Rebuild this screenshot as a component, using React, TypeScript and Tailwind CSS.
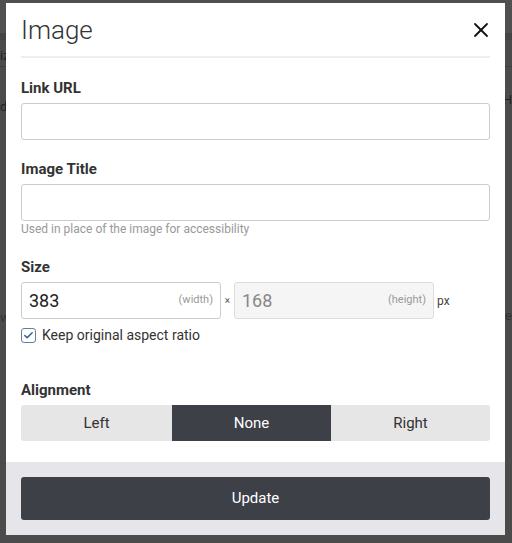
import { X, Check } from "lucide-react";

const font = { fontFamily: "Roboto, 'Noto Sans', sans-serif" };

function Label({ children }: { children: React.ReactNode }) {
  return (
    <div className="text-[15px] font-bold text-[#333] leading-none mb-[7px]">
      {children}
    </div>
  );
}

export default function App() {
  return (
    <div
      className="relative w-[512px] h-[543px] overflow-hidden bg-[#4b4b4b]"
      style={font}
    >
      {/* page behind the overlay */}
      <div className="absolute inset-0 text-[13px] text-[#2e2e2e]">
        <div className="h-[33px] bg-[#505050]" />
        <div className="h-[7px] bg-[#444]" />
        <div className="h-[27px] border-b border-[#3e3e3e] pt-[6px] text-[#1f1f1f]">
          iz
        </div>
        <div className="pt-[30px] text-[#222]">d.</div>
        <div className="absolute right-0 top-[90px] text-[#222]">H</div>
        <div className="absolute left-0 top-[308px] text-[#333]">w</div>
        <div className="absolute right-0 top-[306px] text-[#333]">e</div>
      </div>

      <div className="absolute left-[6px] top-[3px] w-[499px] bg-white">
        <div className="px-[15px]">
          <div className="flex items-center justify-between h-[55px] border-b-2 border-[#eeeeee]">
            <h1 className="text-[26px] font-light text-[#333] leading-none">
              Image
            </h1>
            <X size={24} strokeWidth={1.8} className="text-[#111] mr-[-3px]" />
          </div>

          <div className="pt-[23px]">
            <Label>Link URL</Label>
            <div className="h-[37px] border border-[#cccccc] rounded-[3px]" />
          </div>

          <div className="pt-[22px]">
            <Label>Image Title</Label>
            <div className="h-[37px] border border-[#cccccc] rounded-[3px]" />
            <div className="text-[12px] text-[#999] mt-[1px] leading-[14px]">
              Used in place of the image for accessibility
            </div>
          </div>

          <div className="pt-[24px]">
            <Label>Size</Label>
            <div className="flex items-center">
              <div className="flex items-center justify-between w-[200px] h-[37px] border border-[#cccccc] rounded-[3px] px-[7px]">
                <span className="text-[18px] text-[#222]">383</span>
                <span className="text-[11px] text-[#999]">(width)</span>
              </div>
              <span className="w-[13px] text-center text-[10px] text-[#555]">×</span>
              <div className="flex items-center justify-between w-[200px] h-[37px] border border-[#dddddd] bg-[#f5f5f5] rounded-[3px] px-[7px]">
                <span className="text-[18px] text-[#888]">168</span>
                <span className="text-[11px] text-[#999]">(height)</span>
              </div>
              <span className="ml-[3px] text-[12px] text-[#444]">px</span>
            </div>
            <div className="flex items-center mt-[6px] gap-[6px]">
              <div className="w-[15px] h-[15px] rounded-[3px] border border-[#6b7f95] flex items-center justify-center bg-white">
                <Check size={11} strokeWidth={3.2} className="text-[#2a5f95]" />
              </div>
              <span className="text-[14px] text-[#333]">Keep original aspect ratio</span>
            </div>
          </div>

          <div className="pt-[37px] pb-[21px]">
            <Label>Alignment</Label>
            <div className="flex h-[36px] rounded-[3px] overflow-hidden text-[15px]">
              <div className="w-[151px] bg-[#e6e6e6] text-[#333] flex items-center justify-center">
                Left
              </div>
              <div className="w-[159px] bg-[#3e4048] text-white flex items-center justify-center">
                None
              </div>
              <div className="flex-1 bg-[#e6e6e6] text-[#333] flex items-center justify-center">
                Right
              </div>
            </div>
          </div>
        </div>

        <div className="bg-[#e6e6ea] px-[15px] pt-[15px] pb-[15px]">
          <button className="w-full h-[43px] rounded-[3px] bg-[#3e4048] text-white text-[15px]">
            Update
          </button>
        </div>
      </div>
    </div>
  );
}
